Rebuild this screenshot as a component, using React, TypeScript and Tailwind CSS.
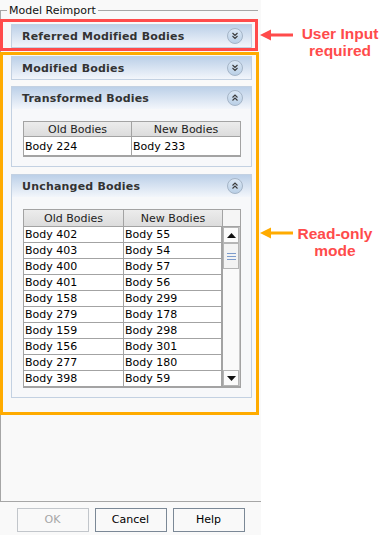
import React from "react";

const rows: [string, string][] = [
  ["Body 402", "Body 55"],
  ["Body 403", "Body 54"],
  ["Body 400", "Body 57"],
  ["Body 401", "Body 56"],
  ["Body 158", "Body 299"],
  ["Body 279", "Body 178"],
  ["Body 159", "Body 298"],
  ["Body 156", "Body 301"],
  ["Body 277", "Body 180"],
  ["Body 398", "Body 59"],
];

function Chevron({ up, id }: { up: boolean; id: string }) {
  return (
    <svg width="16" height="16" viewBox="0 0 16 16">
      <defs>
        <linearGradient id={id} x1="0" y1="0" x2="0" y2="1">
          <stop offset="0" stopColor="#dce8f5" />
          <stop offset="1" stopColor="#b9cfe6" />
        </linearGradient>
      </defs>
      <circle cx="8" cy="8" r="7.5" fill={`url(#${id})`} stroke="#a5b5c7" />
      {up ? (
        <path d="M5.5 7.5 L8 5 L10.5 7.5 M5.5 10.5 L8 8 L10.5 10.5" stroke="#3a3a3a" strokeWidth="1.1" fill="none" />
      ) : (
        <path d="M5.5 5 L8 7.5 L10.5 5 M5.5 8 L8 10.5 L10.5 8" stroke="#3a3a3a" strokeWidth="1.1" fill="none" />
      )}
    </svg>
  );
}

function Header({ title, up, id }: { title: string; up: boolean; id: string }) {
  return (
    <div className="flex h-[22px] items-center justify-between pl-[10px] pr-[8px] bg-gradient-to-b from-[#bcd0e8] to-[#f3f6fb]">
      <span className="text-[11px] font-bold text-[#333333] tracking-[0.2px] leading-none">{title}</span>
      <Chevron up={up} id={id} />
    </div>
  );
}

function Triangle({ down }: { down?: boolean }) {
  return (
    <svg width="9" height="5" viewBox="0 0 9 5">
      {down ? <path d="M0 0 H9 L4.5 5 Z" fill="#111" /> : <path d="M0 5 H9 L4.5 0 Z" fill="#111" />}
    </svg>
  );
}

export default function App() {
  return (
    <div className="relative flex w-[388px] h-[535px] bg-white font-['DejaVu_Sans',sans-serif] text-black overflow-hidden">
      {/* Dialog */}
      <div className="flex flex-col w-[261px] h-full bg-[#f9f9f9]">
        <div className="h-[502px] border-b border-[#a6a6a6]">
          <div className="relative mt-[10px] h-[491px] w-[258px] border-l border-t border-[#a6a6a6] pt-[13px] pl-[10px]">
            <span className="absolute left-[6px] top-[-7px] bg-[#f9f9f9] px-[2px] text-[11px] leading-[13px] text-[#111]">
              Model Reimport
            </span>

            {/* Referred Modified Bodies */}
            <div className="w-[241px] border border-[#c3d1e2]">
              <Header title="Referred Modified Bodies" up={false} id="g1" />
            </div>

            {/* Modified Bodies */}
            <div className="mt-[8px] w-[241px] border border-[#c3d1e2]">
              <Header title="Modified Bodies" up={false} id="g2" />
            </div>

            {/* Transformed Bodies */}
            <div className="mt-[6px] w-[241px] border border-[#c3d1e2] bg-[#f7f8fa]">
              <Header title="Transformed Bodies" up={true} id="g3" />
              <div className="pt-[12px] pb-[9px] pl-[11px]">
                <div className="w-[218px] border border-b-2 border-[#a3a3a3] text-[11px]">
                  <div className="flex h-[15px] border-b border-[#a3a3a3] bg-gradient-to-b from-[#ececec] to-[#dcdcdc] text-[#222]">
                    <div className="w-[108px] border-r border-[#a3a3a3] flex items-center justify-center leading-none">Old Bodies</div>
                    <div className="flex-1 flex items-center justify-center leading-none">New Bodies</div>
                  </div>
                  <div className="flex h-[18px] bg-white">
                    <div className="w-[108px] border-r border-[#a3a3a3] pl-[1px] flex items-center leading-none">Body 224</div>
                    <div className="flex-1 pl-[1px] flex items-center leading-none">Body 233</div>
                  </div>
                </div>
              </div>
            </div>

            {/* Unchanged Bodies */}
            <div className="mt-[7px] w-[241px] border border-[#c3d1e2] bg-[#f7f8fa]">
              <Header title="Unchanged Bodies" up={true} id="g4" />
              <div className="pt-[12px] pb-[9px] pl-[11px]">
                <div className="w-[218px] border border-b-2 border-[#a3a3a3] text-[11px]">
                  <div className="flex h-[17px] border-b border-[#a3a3a3] text-[#222]">
                    <div className="w-[100px] border-r border-[#a3a3a3] flex items-center justify-center leading-none bg-gradient-to-b from-[#ececec] to-[#dcdcdc]">Old Bodies</div>
                    <div className="w-[99px] border-r border-[#a3a3a3] flex items-center justify-center leading-none bg-gradient-to-b from-[#ececec] to-[#dcdcdc]">New Bodies</div>
                    <div className="flex-1 bg-[#f5f5f5]"></div>
                  </div>
                  <div className="flex">
                    <div className="w-[199px] bg-white">
                      {rows.map(([a, b], i) => (
                        <div
                          key={a}
                          className={
                            i < rows.length - 1
                              ? "flex h-[16px] border-b border-[#a3a3a3]"
                              : "flex h-[15px]"
                          }
                        >
                          <div className="w-[100px] border-r border-[#a3a3a3] pl-[1px] flex items-center leading-none">{a}</div>
                          <div className="w-[99px] border-r-2 border-[#a3a3a3] pl-[1px] flex items-center leading-none">{b}</div>
                        </div>
                      ))}
                    </div>
                    <div className="flex-1 flex flex-col bg-[#fafafa] border-r border-[#c8c8c8]">
                      <div className="h-[16px] border border-[#b5b5b5] bg-[#fbfbfb] flex items-center justify-center">
                        <Triangle />
                      </div>
                      <div className="h-[26px] border border-[#b5b5b5] bg-[#f3f3f3] flex flex-col items-center justify-center gap-[2px]">
                        <div className="h-[1px] w-[9px] bg-[#7d9ccc]"></div>
                        <div className="h-[1px] w-[9px] bg-[#7d9ccc]"></div>
                        <div className="h-[1px] w-[9px] bg-[#7d9ccc]"></div>
                      </div>
                      <div className="flex-1"></div>
                      <div className="h-[16px] border border-[#b5b5b5] bg-[#fbfbfb] flex items-center justify-center">
                        <Triangle down />
                      </div>
                    </div>
                  </div>
                </div>
              </div>
            </div>
          </div>
        </div>

        {/* Buttons */}
        <div className="mt-[6px] flex justify-center gap-[6px] text-[11px]">
          <div className="w-[72px] h-[24px] border border-[#c2c6cb] flex items-center justify-center text-[#a6a6a6]">OK</div>
          <div className="w-[72px] h-[24px] border border-[#7b8896] flex items-center justify-center">Cancel</div>
          <div className="w-[72px] h-[24px] border border-[#7b8896] flex items-center justify-center">Help</div>
        </div>
      </div>

      {/* Annotation boxes */}
      <div className="pointer-events-none absolute left-0 top-[19px] w-[258px] h-[32px] border-[3px] border-[#ff4b4b]"></div>
      <div className="pointer-events-none absolute left-0 top-[52px] w-[259px] h-[363px] border-[3px] border-[#ffab00]"></div>

      {/* Callouts */}
      <svg className="absolute left-[260px] top-[28px]" width="34" height="14" viewBox="0 0 34 14">
        <path d="M0 7 L11 1.5 L11 12.5 Z" fill="#ff4b4b" />
        <rect x="10" y="5.5" width="23" height="3" fill="#ff4b4b" />
      </svg>
      <div className="absolute left-[299px] top-[25px] w-[82px] text-center font-['Liberation_Sans',sans-serif] font-bold text-[15.5px] leading-[17px] text-[#ff4b4b]">
        User Input
        <br />
        required
      </div>

      <svg className="absolute left-[260px] top-[226px]" width="34" height="14" viewBox="0 0 34 14">
        <path d="M0 7 L11 1.5 L11 12.5 Z" fill="#ffab00" />
        <rect x="10" y="5.5" width="23" height="3" fill="#ffab00" />
      </svg>
      <div className="absolute left-[294px] top-[225px] w-[82px] text-center font-['Liberation_Sans',sans-serif] font-bold text-[15.5px] leading-[17px] text-[#ff4b4b]">
        Read-only
        <br />
        mode
      </div>
    </div>
  );
}
